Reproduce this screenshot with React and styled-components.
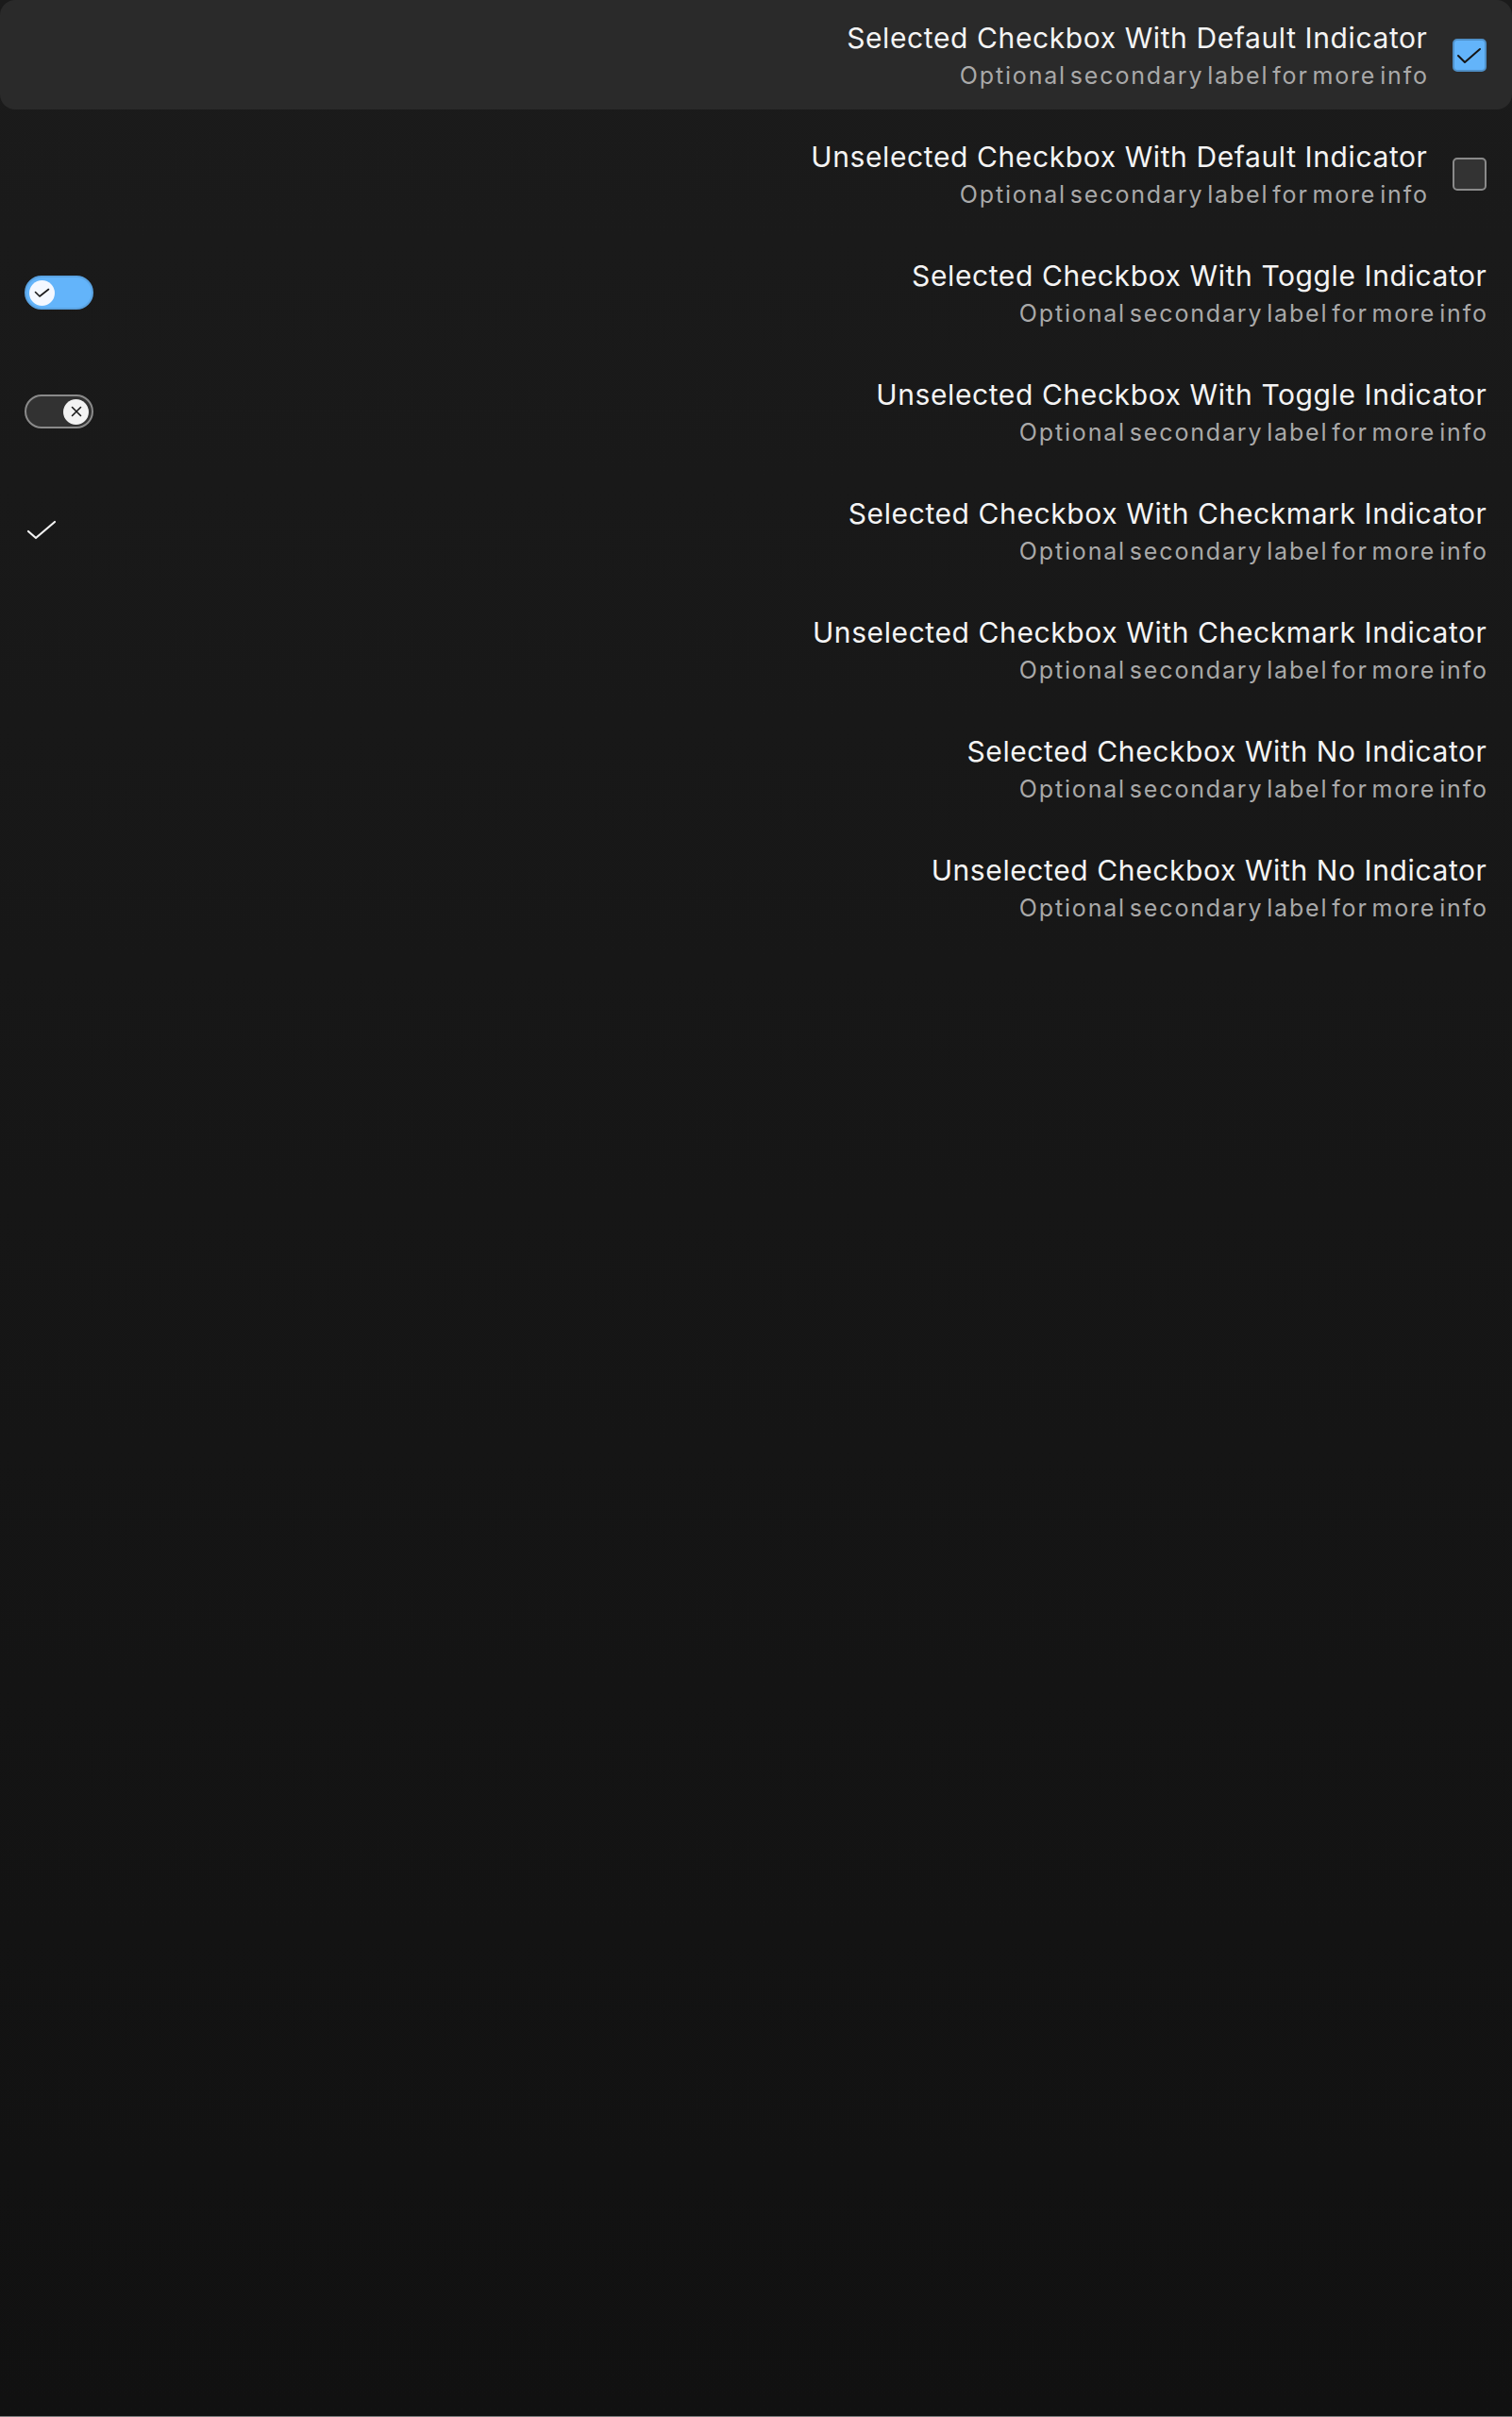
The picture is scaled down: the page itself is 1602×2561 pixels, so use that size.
import React from 'react'
import styled, { createGlobalStyle } from 'styled-components'

const Global = createGlobalStyle`
  html, body {
    margin: 0;
    padding: 0;
    background: #111;
  }
  body {
    font-family: Inter, "Noto Sans", sans-serif;
    -webkit-font-smoothing: antialiased;
  }
`

const Page = styled.div`
  min-height: 100vh;
  box-sizing: border-box;
  background: linear-gradient(180deg, #1b1b1b 0%, #111111 100%);
  border-bottom: 1px solid #7d7d7d;
  display: flex;
  flex-direction: column;
  gap: 10px;
`

const Row = styled.div`
  height: 116px;
  box-sizing: border-box;
  padding: 0 27px 0 26px;
  display: flex;
  align-items: center;
  gap: 27px;
  border-radius: 16px;
  background: ${p => (p.$focused ? '#2a2a2a' : 'transparent')};
`

const Lead = styled.div`
  flex: 0 0 auto;
  display: flex;
  align-items: center;
  padding-left: ${p => p.$inset || 0}px;
`

const Labels = styled.div`
  margin-left: auto;
  display: flex;
  flex-direction: column;
  align-items: flex-end;
  text-align: right;
`

const Title = styled.div`
  font-size: 30px;
  line-height: 36px;
  color: #f4f4f4;
  letter-spacing: 0.6px;
  margin-right: -0.5px;
`

const Secondary = styled.div`
  margin-top: 8px;
  font-size: 25px;
  line-height: 28px;
  color: #a9a9a9;
  letter-spacing: 1.83px;
  word-spacing: -5px;
  margin-right: -1.8px;
`

const Box = styled.div`
  flex: 0 0 auto;
  width: 36px;
  height: 35px;
  box-sizing: border-box;
  border-radius: 5px;
  display: flex;
  align-items: center;
  justify-content: center;
  background: ${p => (p.$on ? '#63b4fa' : '#333333')};
  border: 2px solid ${p => (p.$on ? '#4f90c8' : '#8a8a8a')};
`

const Track = styled.div`
  width: 73px;
  height: 36px;
  box-sizing: border-box;
  border-radius: 18px;
  padding: 0 3px;
  display: flex;
  align-items: center;
  justify-content: ${p => (p.$on ? 'flex-start' : 'flex-end')};
  background: ${p => (p.$on ? '#63b4fa' : '#323232')};
  border: 2px solid ${p => (p.$on ? '#5aa3e2' : '#8a8a8a')};
`

const Knob = styled.div`
  width: 27px;
  height: 27px;
  border-radius: 50%;
  background: ${p => (p.$on ? '#f4f8ff' : '#f2f2f2')};
  display: flex;
  align-items: center;
  justify-content: center;
`

const Mark = styled.svg`
  display: block;
`

function BoxCheck() {
  return (
    <Mark width="32" height="31" viewBox="0 0 32 31">
      <polyline points="4,16 11,23 27,9" fill="none" stroke="#151515" strokeWidth="2" strokeLinecap="round" strokeLinejoin="round" />
    </Mark>
  )
}

function SmallCheck() {
  return (
    <Mark width="17" height="11" viewBox="0 0 17 11">
      <polyline points="1.5,4.5 6,9 15.5,1.5" fill="none" stroke="#1a1a1a" strokeWidth="1.6" strokeLinecap="round" strokeLinejoin="round" />
    </Mark>
  )
}

function SmallCross() {
  return (
    <Mark width="14" height="14" viewBox="0 0 14 14">
      <path d="M2.5 2.5 L11.5 11.5 M11.5 2.5 L2.5 11.5" stroke="#1a1a1a" strokeWidth="1.6" strokeLinecap="round" />
    </Mark>
  )
}

function PlainCheck() {
  return (
    <Mark width="32" height="22" viewBox="0 0 32 22">
      <polyline points="2,12 10,19 30,2" fill="none" stroke="#f2f2f2" strokeWidth="2.2" strokeLinecap="round" strokeLinejoin="round" />
    </Mark>
  )
}

function Toggle({ on }) {
  return (
    <Track $on={on}>
      <Knob $on={on}>{on ? <SmallCheck /> : <SmallCross />}</Knob>
    </Track>
  )
}

const items = [
  { title: 'Selected Checkbox With Default Indicator', kind: 'box', on: true, focused: true },
  { title: 'Unselected Checkbox With Default Indicator', kind: 'box', on: false },
  { title: 'Selected Checkbox With Toggle Indicator', kind: 'toggle', on: true },
  { title: 'Unselected Checkbox With Toggle Indicator', kind: 'toggle', on: false },
  { title: 'Selected Checkbox With Checkmark Indicator', kind: 'check', on: true },
  { title: 'Unselected Checkbox With Checkmark Indicator', kind: 'check', on: false },
  { title: 'Selected Checkbox With No Indicator', kind: 'none', on: true },
  { title: 'Unselected Checkbox With No Indicator', kind: 'none', on: false },
]

function CheckRow({ item }) {
  const { title, kind, on, focused } = item
  return (
    <Row $focused={focused}>
      {kind === 'toggle' && (
        <Lead>
          <Toggle on={on} />
        </Lead>
      )}
      {kind === 'check' && on && (
        <Lead $inset={2}>
          <PlainCheck />
        </Lead>
      )}
      <Labels>
        <Title>{title}</Title>
        <Secondary>Optional secondary label for more info</Secondary>
      </Labels>
      {kind === 'box' && <Box $on={on}>{on && <BoxCheck />}</Box>}
    </Row>
  )
}

export default function App() {
  return (
    <>
      <Global />
      <Page>
        {items.map(it => (
          <CheckRow key={it.title} item={it} />
        ))}
      </Page>
    </>
  )
}
